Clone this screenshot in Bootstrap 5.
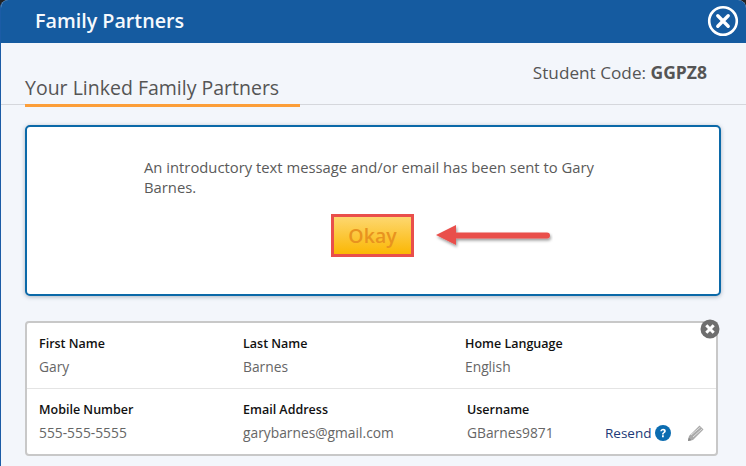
<!DOCTYPE html>
<html lang="en"><head><meta charset="utf-8"><title>Family Partners</title>
<link href="https://cdn.jsdelivr.net/npm/bootstrap@5.3.0/dist/css/bootstrap.min.css" rel="stylesheet">
<style>
html,body{height:100%;overflow:hidden;background:#222}
body{font-family:"Open Sans","Noto Sans",sans-serif;color:#555}
.fp-modal{width:746px;height:466px;background:#f3f6fb;border-left:1px solid #1b5ca6;border-radius:8px 8px 0 0;overflow:hidden}
.fp-head{height:43px;background:#155ba0;padding:0 7px 0 34px}
.fp-head h1{font-size:19.700px;font-weight:600;color:#f6f9fd;margin:0;line-height:1;padding-bottom:2px}
.fp-head svg{margin-top:-2px}
.fp-tabs{height:62px;border-bottom:1px solid #d5d7dc;padding:0 39px 0 24px}
.fp-tab{width:275px;height:64px;border-bottom:3px solid #fc9e39;font-size:19.500px;line-height:1;color:#555;padding-top:35px;white-space:nowrap}
.fp-code{font-size:17.200px;padding-top:17px;line-height:24px}
.fp-code strong{font-weight:700;font-size:17.500px}
.fp-msg{margin:20px 0 0 24px;width:696px;height:171px;background:#fff;border:2px solid #0b69a8;border-radius:5px;box-shadow:0 1px 4px rgba(40,60,90,.35);padding:30px 118px 0 117px}
.fp-msg p{font-size:14.800px;line-height:20px;margin:0;color:#5a5a5a}
.fp-okrow{padding-left:187px;margin-top:17px;margin-right:-118px}
.fp-ok{width:83px;height:43px;padding:0;border:3px solid #e94f4b;border-radius:0;background:linear-gradient(#fdd76f,#fbb704);color:#e8931f;font-size:19.500px;font-weight:600;line-height:1;flex:none}
.fp-arrow{margin-left:21px;margin-top:9px;flex:none}
.fp-card{position:relative;margin:25px 0 0 24px;width:693px;height:135px;background:#fff;border:2px solid #c8c8c8;border-radius:4px}
.fp-row{height:65px;padding:15px 0 0 12px}
.fp-row+.fp-row{border-top:1px solid #e4e4e4;height:66px;padding-top:15px}
.fp-f{font-size:12.500px;line-height:1}
.fp-f b{display:block;font-weight:600;color:#111;margin-bottom:9px}
.fp-f span{font-size:13.800px;color:#666}
.fp-c1{width:204px}.fp-c2{width:222px}.fp-c3{width:139px}
.fp-c2b{width:224px}
.fp-resend{font-size:13.500px;color:#213a78;margin-top:19px;margin-left:-1px;align-self:flex-start}
.fp-x{position:absolute;top:-4px;right:-4px}
</style></head>
<body>
<div class="fp-modal">
  <div class="fp-head d-flex align-items-center justify-content-between">
    <h1>Family Partners</h1>
    <svg width="32" height="32" viewBox="0 0 32 32" aria-label="Close"><circle cx="16" cy="16" r="13.800" fill="none" stroke="#fff" stroke-width="2.600"/><path d="M10.800 10.800 21.200 21.200M21.200 10.800 10.800 21.200" stroke="#fff" stroke-width="3.400" stroke-linecap="round"/></svg>
  </div>
  <div class="fp-tabs d-flex justify-content-between">
    <div class="fp-tab">Your Linked Family Partners</div>
    <div class="fp-code">Student Code: <strong>GGPZ8</strong></div>
  </div>
  <div class="fp-msg">
    <p>An introductory text message and/or email has been sent to Gary Barnes.</p>
    <div class="fp-okrow d-flex align-items-start">
      <button type="button" class="btn fp-ok">Okay</button>
      <svg class="fp-arrow" width="118" height="34" viewBox="0 0 118 34" aria-hidden="true"><defs><filter id="sh" x="-10%" y="-30%" width="120%" height="180%"><feDropShadow dx="1" dy="2" stdDeviation="1.500" flood-color="#000" flood-opacity=".4"/></filter></defs><path d="M1 12 21 2V9.500H112a2.500 2.500 0 0 1 0 6H21V22Z" fill="#e94f4b" filter="url(#sh)"/></svg>
    </div>
  </div>
  <div class="fp-card">
    <div class="fp-row d-flex">
      <div class="fp-f fp-c1"><b>First Name</b><span>Gary</span></div>
      <div class="fp-f fp-c2"><b>Last Name</b><span>Barnes</span></div>
      <div class="fp-f"><b>Home Language</b><span>English</span></div>
    </div>
    <div class="fp-row d-flex">
      <div class="fp-f fp-c1"><b>Mobile Number</b><span>555-555-5555</span></div>
      <div class="fp-f fp-c2b"><b>Email Address</b><span>garybarnes@gmail.com</span></div>
      <div class="fp-f fp-c3"><b>Username</b><span>GBarnes9871</span></div>
      <div class="fp-resend d-flex align-items-center">Resend
        <svg class="ms-1" width="16" height="16" viewBox="0 0 16 16" aria-hidden="true"><circle cx="8" cy="8" r="8" fill="#0b6cb0"/><path d="M5.300 6.200C5.400 4.600 6.600 3.700 8.100 3.700c1.600 0 2.700.9 2.700 2.300 0 1.100-.6 1.600-1.300 2.100-.6.400-.8.700-.8 1.300H7.100C7 8.400 7.300 7.900 8 7.400c.6-.4.900-.7.900-1.200 0-.5-.4-.9-.9-.9-.6 0-1 .4-1.100 1ZM7 10.300h1.800V12.200H7Z" fill="#fff"/></svg>
        <svg class="ms-3" width="18" height="18" viewBox="0 0 18 18" aria-hidden="true"><path d="M1 17 2 12 12.500 1.500 16.500 5.500 6 16Z" fill="#aaa"/><path d="M4 11 13.500 3M6 13 15 5" stroke="#e0e0e0" stroke-width="1"/><path d="M1 17 1.700 13.500 4.500 16.300Z" fill="#888"/></svg>
      </div>
    </div>
    <svg class="fp-x" width="20" height="20" viewBox="0 0 20 20" aria-label="Remove"><circle cx="10" cy="10" r="9.500" fill="#6e6e6e"/><path d="M6.300 6.300 13.700 13.700M13.700 6.300 6.300 13.700" stroke="#fff" stroke-width="3"/></svg>
  </div>
</div>
</body></html>
